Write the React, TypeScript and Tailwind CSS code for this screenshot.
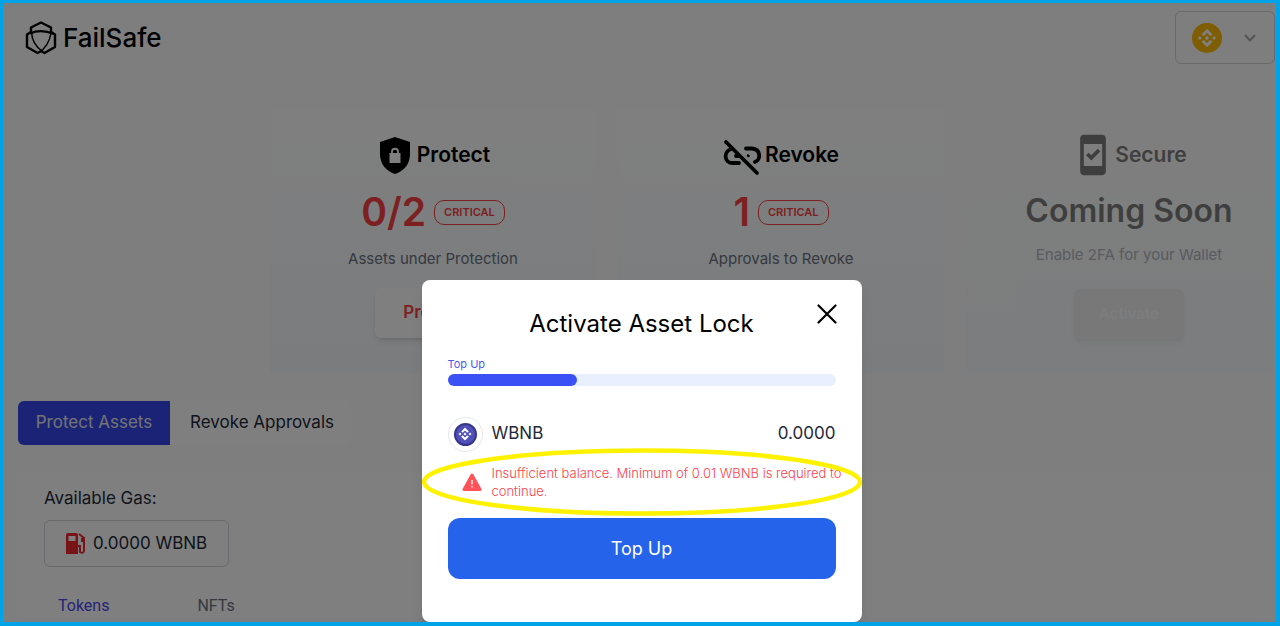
import { ReactNode } from "react";
import { MdSecurityUpdateGood } from "react-icons/md";

function FailSafeMark() {
  return (
    <svg viewBox="0 0 32 34" className="w-8 h-[34px]" fill="none" stroke="black" strokeWidth="2.400" strokeLinejoin="round">
      <path d="M6 12V6.500L16 1.500L26 6.500V12" />
      <path d="M6 11L2 13.500V26L12.500 32L17 29.500" />
      <path d="M26 11L30 13.500V26L19.500 32L15.500 29.500" />
      <path d="M5 12.500Q16 7.500 29 13" />
      <path d="M6.500 11Q7 23 17 30" strokeWidth="1.500" />
      <path d="M26 12Q24 25 13.500 32" strokeWidth="1.500" />
    </svg>
  );
}

function BnbGlyph({ className }: { className?: string }) {
  return (
    <svg viewBox="0 0 24 24" className={className} fill="currentColor">
      <path d="M12 1L5.500 7.500L7.900 9.900L12 5.800L16.100 9.900L18.500 7.500Z" />
      <path d="M12 23L5.500 16.500L7.900 14.100L12 18.200L16.100 14.100L18.500 16.500Z" />
      <path d="M12 9.400L14.600 12L12 14.600L9.400 12Z" />
      <path d="M3.400 9.600L5.800 12L3.400 14.400L1 12Z" />
      <path d="M20.600 9.600L23 12L20.600 14.400L18.200 12Z" />
    </svg>
  );
}

function ShieldLock() {
  return (
    <svg viewBox="0 0 30 37" className="w-[30px] h-[37px] ml-1 mr-[7px]">
      <path d="M15 0L30 5V17C30 27 24 34 15 37C6 34 0 27 0 17V5Z" fill="black" />
      <path d="M9.500 16H20.500V26H9.500Z" fill="white" />
      <path d="M12 16V14.500C12 10.800 18 10.800 18 14.500V16" fill="none" stroke="white" strokeWidth="1.800" />
    </svg>
  );
}

function BrokenLink() {
  return (
    <svg viewBox="0 0 38 38" className="size-[38px] mr-1 mt-1" fill="none" stroke="black" strokeWidth="3.800" strokeLinecap="round">
      <path d="M3 4L34 35" />
      <path d="M8 11C0 14 1 25 10 25H16" />
      <path d="M23 10.500H29C38 11 38 22 32 24" />
      <path d="M13 18H16" />
      <path d="M25 17.500L25.500 18" strokeWidth="2.500" />
    </svg>
  );
}

function Critical() {
  return (
    <span className="flex items-center h-[25px] px-[9px] border border-[#fb4044] rounded-[10px] text-[#fb4044] text-[11px] font-semibold">
      CRITICAL
    </span>
  );
}

type CardProps = { icon: ReactNode; title: string; children: ReactNode };

function Card({ icon, title, children }: CardProps) {
  return (
    <section className="flex-1 min-w-[326px] h-[264px] pt-[26px] flex flex-col items-center rounded bg-gradient-to-b from-white to-[#f5f9fc]">
      <h2 className="flex items-center h-10 text-[21px] font-semibold">
        {icon}
        {title}
      </h2>
      {children}
    </section>
  );
}

function Dashboard() {
  return (
    <div className="h-full overflow-hidden bg-[#fcfcfc]">
      <header className="flex justify-between items-start pl-[22px] pr-px pt-2">
        <a href="#" className="flex items-center gap-[6px] mt-[9px] text-[26px] leading-9 font-medium">
          <FailSafeMark />
          FailSafe
        </a>
        <button aria-label="Network" className="flex items-center justify-between w-[100px] h-[53px] pl-4 pr-[18px] border border-gray-300 rounded-md">
          <span className="flex items-center justify-center size-[30px] rounded-full bg-[#fcba08] text-white">
            <BnbGlyph className="size-5" />
          </span>
          <svg viewBox="0 0 12 8" className="w-3 h-2" fill="none" stroke="#aaa" strokeWidth="2">
            <path d="M1 1L6 6.500L11 1" />
          </svg>
        </button>
      </header>

      <div className="flex gap-[22px] mt-[45px] pl-[267px]">
        <Card icon={<ShieldLock />} title="Protect">
          <div className="flex items-center gap-2 mt-[15px] h-11">
            <span className="text-[39px] leading-[44px] font-semibold text-[#fb4044]">0/2</span>
            <Critical />
          </div>
          <p className="mt-[15px] text-[15px] leading-5 text-gray-500">Assets under Protection</p>
          <button className="mt-[19px] w-[116px] h-[50px] rounded-md bg-white shadow-md text-[17px] font-semibold text-[#fb4044]">
            Protect
          </button>
        </Card>
        <Card icon={<BrokenLink />} title="Revoke">
          <div className="flex items-center gap-2 mt-[15px] h-11">
            <span className="text-[39px] leading-[44px] font-semibold text-[#fb4044]">1</span>
            <Critical />
          </div>
          <p className="mt-[15px] text-[15px] leading-5 text-gray-500">Approvals to Revoke</p>
        </Card>
        <div className="flex-1 flex opacity-50">
          <Card icon={<MdSecurityUpdateGood className="size-11" />} title="Secure">
            <p className="mt-[14px] text-[32px] leading-[44px] font-semibold">Coming Soon</p>
            <p className="mt-3 text-[15px] leading-5 text-gray-500">Enable 2FA for your Wallet</p>
            <button disabled className="mt-6 w-[110px] h-[50px] rounded-md bg-gray-200 shadow-md text-[15px] font-semibold text-gray-50">
              Activate
            </button>
          </Card>
        </div>
      </div>

      <nav className="flex mt-[28px] pl-[15px] text-[17px]">
        <button className="w-[152px] h-11 rounded-l-md bg-[#3546ec] text-gray-200">Protect Assets</button>
        <button className="w-[180px] h-11 pl-1 rounded-r-md bg-white text-gray-800">Revoke Approvals</button>
      </nav>

      <section className="ml-[15px] mt-[27px] pl-[26px] pt-[14px] bg-white">
        <p className="text-[17px] leading-6 text-gray-800">Available Gas:</p>
        <div className="flex items-center gap-[7px] mt-[10px] w-[185px] h-[47px] pl-[21px] border border-gray-300 rounded-md text-[17px] text-gray-800">
          <svg viewBox="0 0 20 21" className="w-5 h-[21px]" fill="#f02830">
            <path fillRule="evenodd" d="M2 0H10Q12 0 12 2V21H0V2Q0 0 2 0ZM2.500 3V8H9.500V3Z" />
            <path d="M13 1L18 5V18Q17 21 14 19V13H12" fill="none" stroke="#f02830" strokeWidth="2" />
            <path d="M15 5H19V9H15Z" />
          </svg>
          0.0000 WBNB
        </div>
        <div className="flex gap-[88px] mt-[27px] pl-[14px] font-['Roboto',sans-serif] text-base">
          <button className="text-[#4a48f0]">Tokens</button>
          <button className="text-gray-500">NFTs</button>
        </div>
      </section>
    </div>
  );
}

function AssetLockDialog() {
  return (
    <div role="dialog" aria-labelledby="lock-title" className="relative w-[440px] px-[26px] pt-[28px] pb-[43px] rounded-lg bg-white shadow-lg">
      <h1 id="lock-title" className="text-center text-2xl leading-8">Activate Asset Lock</h1>
      <button aria-label="Close" className="absolute right-[25px] top-6 size-5">
        <svg viewBox="0 0 20 20" fill="none" stroke="black" strokeWidth="2.200" strokeLinecap="round">
          <path d="M1.500 1.500L18.500 18.500M18.500 1.500L1.500 18.500" />
        </svg>
      </button>
      <p className="mt-4 text-[11px] leading-4 text-[#4a5cf0]">Top Up</p>
      <div className="mt-[2px] h-3 rounded-full bg-[#e8effe]">
        <div className="w-1/3 h-full rounded-full bg-[#3b50f5]" />
      </div>
      <div className="flex items-center mt-[30px] h-9 text-[17px] text-gray-800">
        <span className="flex items-center justify-center size-[35px] mr-[9px] border border-gray-200 rounded-full">
          <span className="flex items-center justify-center size-[23px] rounded-full border-2 border-[#35358c] bg-[#5050b8] text-white">
            <BnbGlyph className="size-[14px]" />
          </span>
        </span>
        WBNB
        <span className="ml-auto">0.0000</span>
      </div>
      <div className="relative flex items-center gap-[10px] mt-3 -mr-4 pl-[14px] text-[13px] leading-[18px] font-light text-[#ff4047]">
        <svg viewBox="0 0 20 19" className="w-5 h-[19px] shrink-0">
          <path d="M10 2L18 16.500H2Z" fill="#ff5259" stroke="#ff5259" strokeWidth="3" strokeLinejoin="round" />
          <path d="M10 7V11.500M10 13V14.500" stroke="white" strokeWidth="1.300" />
        </svg>
        <p>Insufficient balance. Minimum of 0.01 WBNB is required to continue.</p>
        <svg viewBox="0 0 440 68" className="absolute -left-[26px] -top-4 w-[440px] h-[68px]" fill="none">
          <ellipse cx="220" cy="34" rx="218" ry="31.500" stroke="#fff200" strokeWidth="4.500" />
        </svg>
      </div>
      <button className="w-full h-[61px] mt-[18px] rounded-xl bg-[#2563eb] text-lg text-white">Top Up</button>
    </div>
  );
}

export default function App() {
  return (
    <div className="relative h-screen overflow-hidden border-t-[3px] border-l-[3px] border-r-4 border-b-4 border-[#00a2e8] font-['Inter',sans-serif] text-black">
      <Dashboard />
      <div className="absolute inset-0 flex items-end justify-center pl-1 bg-black/50">
        <AssetLockDialog />
      </div>
    </div>
  );
}
